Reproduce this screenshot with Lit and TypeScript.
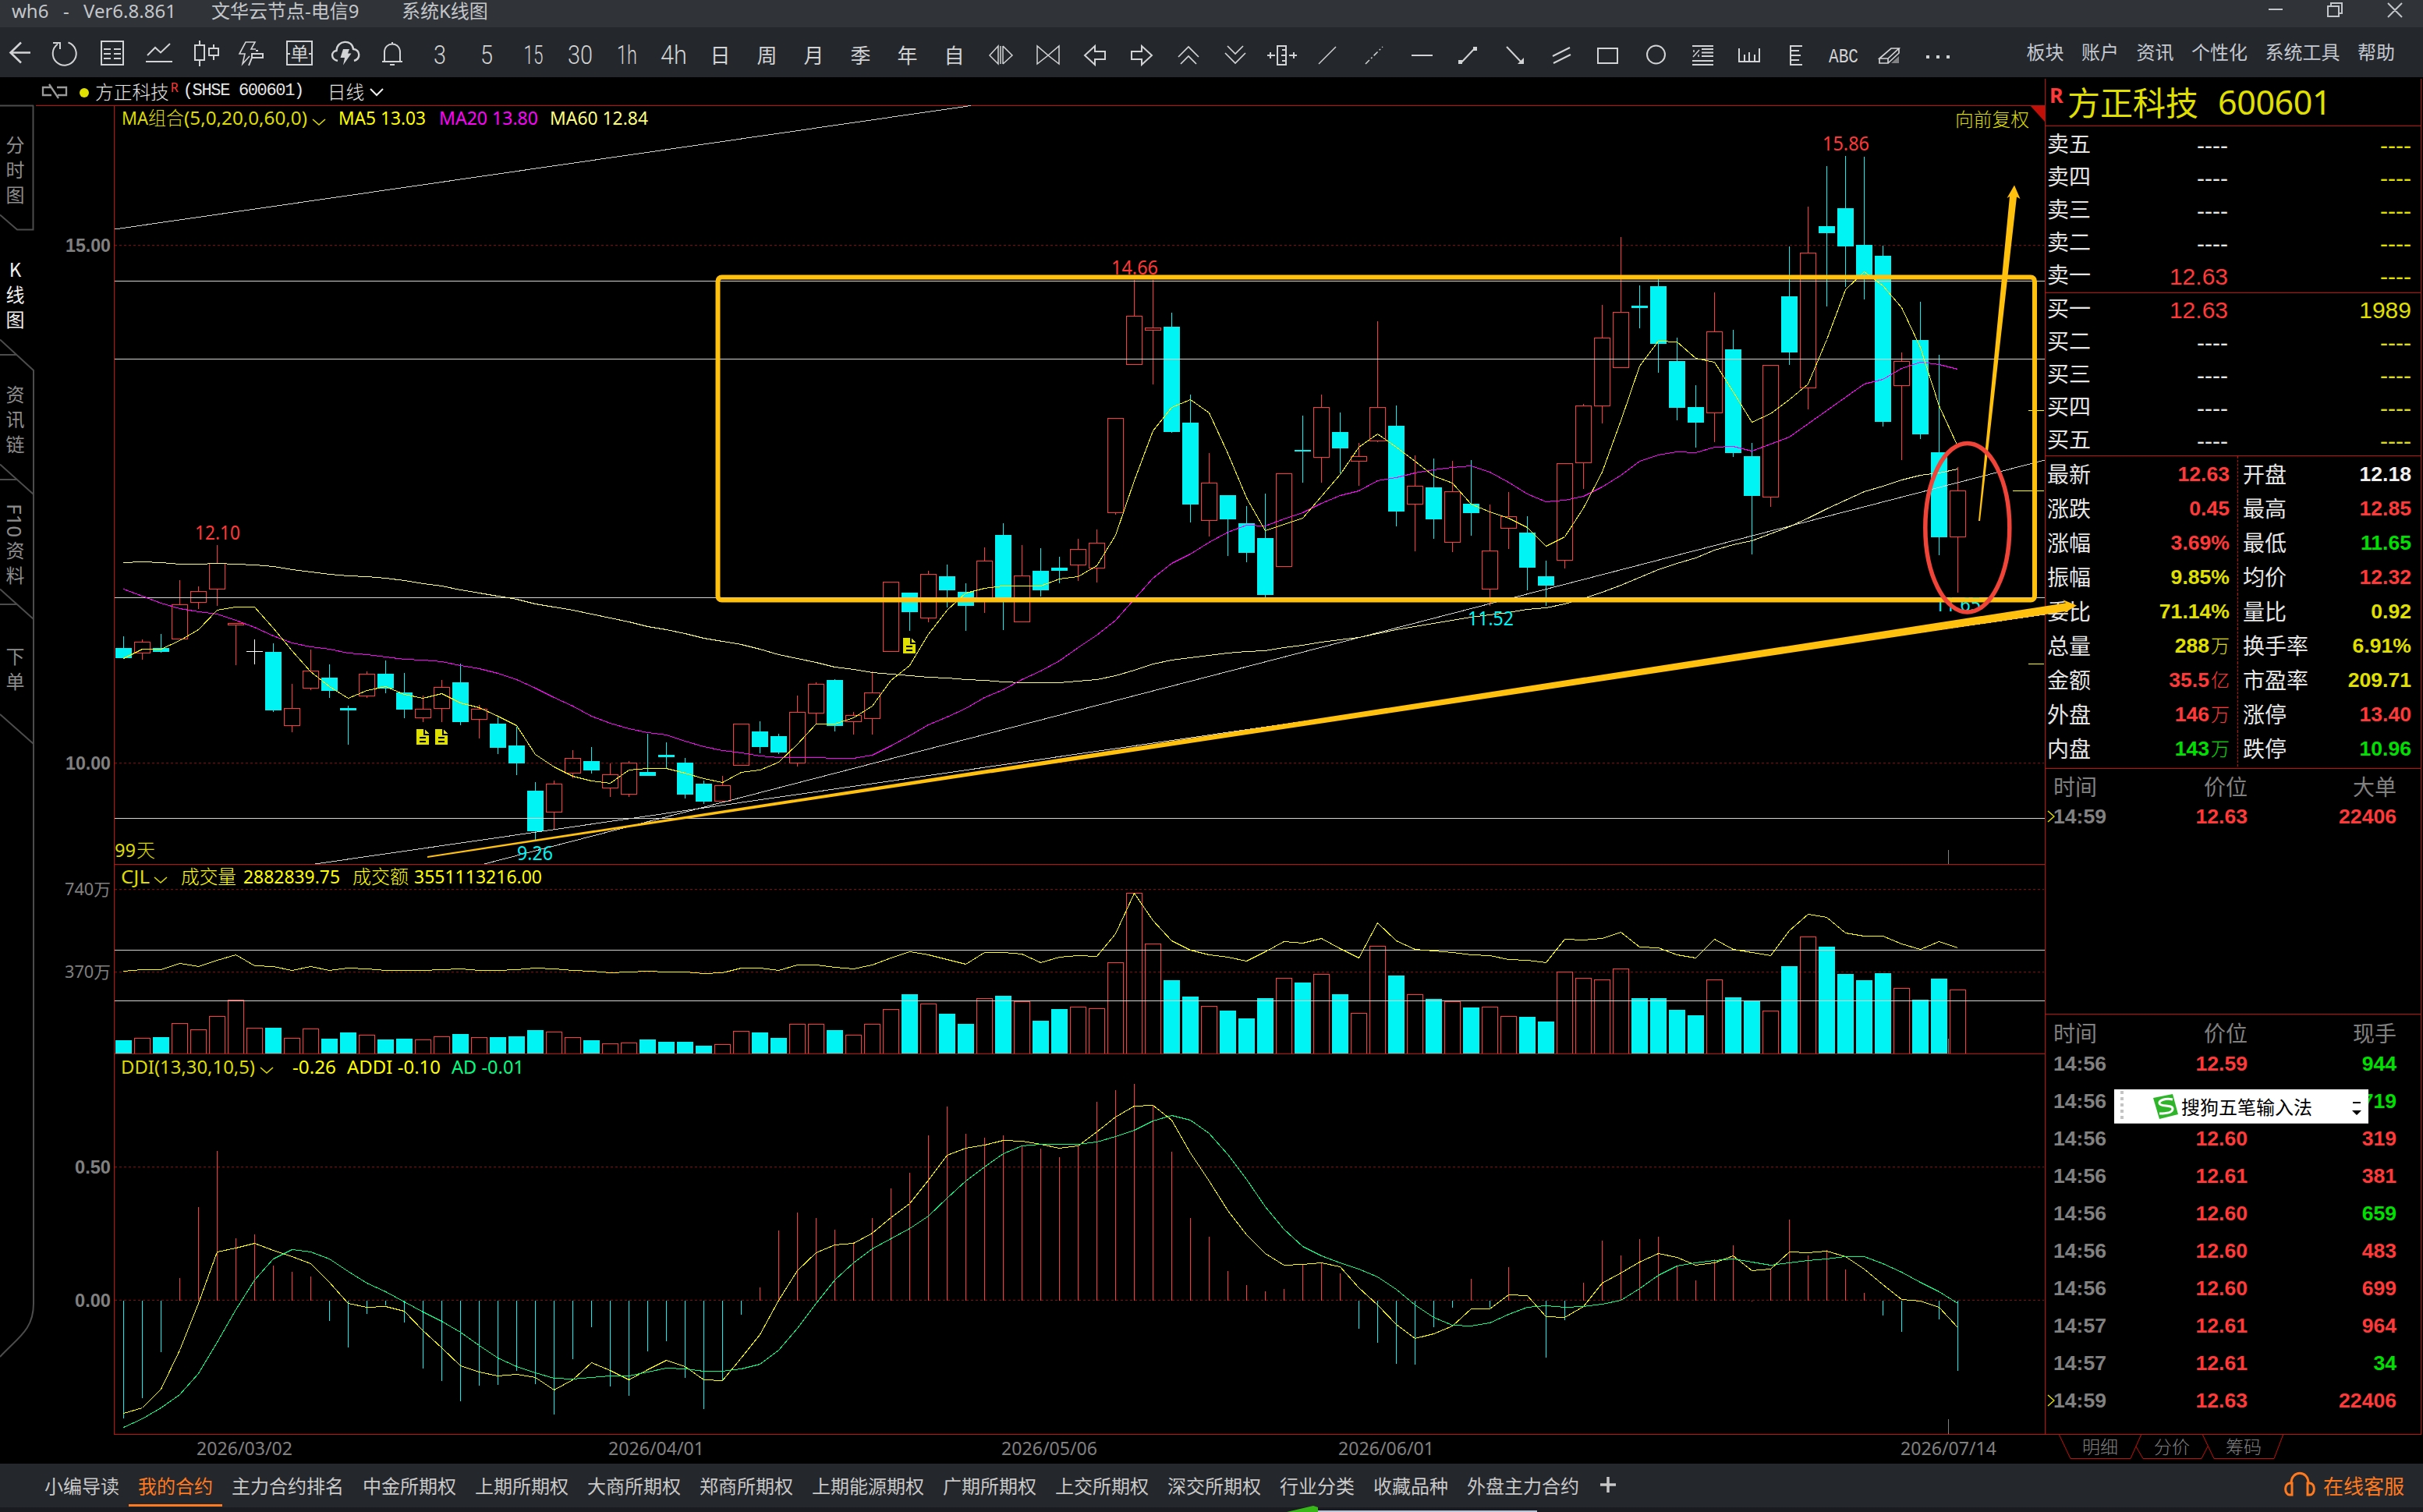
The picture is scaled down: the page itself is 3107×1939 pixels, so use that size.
import { LitElement, html, svg, css } from "lit";
import { customElement, property } from "lit/decorators.js";
import { classMap } from "lit/directives/class-map.js";

type Candle = [kind: number, high: number, top: number, bottom: number, low: number];

// kind: 1 up, -1 down, 0 flat; the rest are screen rows
const CANDLES: Candle[] = [
    [-1, 816, 831, 844, 844], [1, 820, 823.5, 837.5, 846], [-1, 813, 831, 836, 837], [1, 744, 775.5, 819.5, 820],
    [1, 752, 758.5, 772.5, 781], [1, 699, 722.5, 755.5, 777], [1, 799, 799.5, 801.5, 853], [0, 820, 835.5, 835.5, 852],
    [-1, 825, 836, 911, 913], [1, 877, 908.5, 930.5, 939], [1, 833, 860.5, 882.5, 885], [-1, 852, 869, 886, 895],
    [-1, 905, 908, 911, 955], [1, 861, 864.5, 892.5, 895], [-1, 847, 864, 883, 889], [-1, 863, 888, 910, 921],
    [1, 892, 909.5, 920.5, 926], [1, 872, 881.5, 908.5, 926], [-1, 851, 875, 926, 930], [1, 904, 909.5, 922.5, 947],
    [-1, 920, 928, 959, 967], [-1, 932, 956, 979, 994], [-1, 1003, 1014, 1066, 1077], [1, 1001, 1005.5, 1041.5, 1064],
    [1, 962, 972.5, 991.5, 998], [-1, 958, 976, 988, 992], [1, 979, 993.5, 1010.5, 1022], [1, 976, 978.5, 1018.5, 1022],
    [-1, 941, 990, 995, 995], [-1, 952, 968, 971, 985], [-1, 972, 978, 1019, 1024], [-1, 1001, 1005, 1028, 1031],
    [1, 995, 1007.5, 1027.5, 1028], [1, 928, 928.5, 981.5, 982], [-1, 925, 938, 958, 966], [-1, 941, 944, 965, 967],
    [1, 892, 913.5, 978.5, 983], [1, 875, 877.5, 914.5, 928], [-1, 871, 872, 931, 938], [1, 913, 917.5, 925.5, 942],
    [1, 861, 888.5, 921.5, 942], [1, 746, 746.5, 835.5, 836], [-1, 760, 760, 785, 809], [1, 732, 736.5, 792.5, 798],
    [-1, 724, 739, 757, 779], [-1, 748, 759, 777, 809], [1, 702, 719.5, 766.5, 786], [-1, 671, 686, 767, 808],
    [1, 699, 738.5, 797.5, 798], [-1, 703, 732, 757, 765], [-1, 714, 728, 732, 748], [1, 691, 704.5, 724.5, 745],
    [1, 679, 696.5, 728.5, 747], [1, 536, 536.5, 657.5, 660], [1, 359, 405.5, 467.5, 468], [1, 359, 420.5, 423.5, 493],
    [-1, 401, 419, 554, 555], [-1, 506, 542, 647, 670], [1, 581, 619.5, 667.5, 688], [-1, 635, 635, 666, 713],
    [-1, 649, 671, 709, 721], [-1, 633, 690, 763, 766], [1, 607, 607.5, 726.5, 727], [-1, 533, 577, 579, 619],
    [1, 506, 522.5, 586.5, 619], [-1, 529, 554, 575, 607], [1, 568, 585.5, 591.5, 623], [1, 412, 522.5, 565.5, 567],
    [-1, 520, 546, 656, 675], [1, 584, 623.5, 646.5, 707], [-1, 588, 625, 666, 691], [1, 591, 630.5, 695.5, 708],
    [-1, 590, 646, 658, 687], [1, 647, 706.5, 755.5, 777], [1, 631, 662.5, 677.5, 704], [-1, 662, 683, 728, 757],
    [-1, 719, 739, 751, 777], [1, 594, 594.5, 718.5, 729], [1, 518, 520.5, 593.5, 627], [1, 391, 433.5, 520.5, 543],
    [1, 304, 400.5, 471.5, 472], [-1, 366, 392, 395, 421], [-1, 358, 367, 441, 478], [-1, 433, 463, 523, 539],
    [-1, 494, 522, 542, 574], [1, 375, 425.5, 529.5, 567], [-1, 423, 448, 581, 586], [-1, 568, 585, 636, 711],
    [1, 468, 468.5, 637.5, 650], [-1, 316, 380, 452, 468], [1, 265, 324.5, 497.5, 525], [-1, 213, 290, 299, 393],
    [-1, 200, 267, 316, 368], [-1, 201, 314, 356, 384], [-1, 315, 328, 541, 547], [1, 452, 463.5, 494.5, 590],
    [-1, 387, 436, 557, 563], [-1, 455, 580, 689, 712], [1, 599, 629.5, 688.5, 760],
];

const MA5 = [
    844, 832, 832, 821, 807, 782, 778, 778, 805, 834, 861, 880, 895, 885, 880, 890, 895, 889, 901, 907, 918, 930, 967, 983, 995,
    1001, 1004, 987, 985, 985, 991, 998, 1003, 990, 987, 977, 954, 928, 928, 920, 905, 872, 853, 813, 782, 760, 754, 751, 751, 751,
    742, 739, 725, 686, 616, 552, 522, 512, 529, 581, 638, 680, 672, 664, 636, 608, 573, 556, 573, 591, 610, 619, 646, 656, 664,
    676, 700, 688, 651, 605, 539, 469, 437, 438, 459, 464, 502, 541, 530, 512, 492, 435, 371, 348, 366, 394, 445, 520, 572,
];
const MA20 = [
    755, 764, 773, 780, 784, 787, 795, 804, 815, 824, 829, 832, 837, 839, 842, 845, 846, 848, 853, 857, 863, 871, 882, 894, 905,
    918, 927, 934, 939, 942, 950, 957, 962, 965, 969, 971, 971, 971, 972, 972, 968, 956, 943, 929, 919, 908, 894, 884, 871, 860,
    847, 830, 814, 795, 768, 741, 722, 710, 695, 682, 673, 674, 665, 657, 645, 635, 629, 616, 612, 606, 602, 599, 597, 605, 618,
    633, 643, 641, 636, 624, 609, 591, 583, 579, 580, 573, 572, 578, 569, 560, 543, 526, 509, 492, 486, 472, 464, 467, 473,
];
const MA60 = [
    721, 720, 721, 723, 723, 722, 723, 724, 726, 730, 733, 736, 738, 739, 741, 744, 748, 751, 756, 760, 764, 768, 774, 778, 782,
    787, 792, 797, 803, 807, 812, 818, 822, 826, 832, 839, 844, 849, 855, 858, 862, 864, 866, 868, 869, 871, 872, 874, 875, 875,
    875, 873, 871, 866, 859, 851, 846, 843, 840, 837, 835, 834, 830, 827, 823, 820, 817, 812, 807, 803, 799, 795, 791, 788, 785,
    781, 779, 774, 767, 759, 750, 740, 730, 722, 715, 705, 698, 693, 684, 675, 664, 652, 641, 630, 623, 615, 609, 606, 601,
];

const VOLUME = [
    1334, 1331, 1330, 1312, 1320, 1303, 1282, 1318, 1318, 1331, 1319, 1332, 1324, 1327, 1333, 1332, 1333, 1329, 1326, 1330,
    1330, 1329, 1321, 1323, 1330, 1334, 1338, 1337, 1333, 1336, 1336, 1341, 1339, 1322, 1324, 1331, 1313, 1313, 1321, 1327,
    1313, 1294, 1275, 1287, 1300, 1313, 1280, 1277, 1284, 1309, 1294, 1291, 1293, 1234, 1145, 1210, 1257, 1278, 1290, 1296,
    1306, 1280, 1254, 1260, 1249, 1275, 1299, 1213, 1251, 1275, 1281, 1284, 1292, 1291, 1303, 1304, 1310, 1246, 1254, 1256,
    1242, 1280, 1280, 1295, 1302, 1256, 1279, 1283, 1296, 1239, 1201, 1214, 1249, 1257, 1248, 1267, 1282, 1255, 1269,
];
const TURNOVER = [
    1245, 1243, 1243, 1235, 1239, 1231, 1224, 1238, 1239, 1244, 1239, 1244, 1241, 1242, 1244, 1244, 1244, 1243, 1242, 1244,
    1244, 1243, 1241, 1242, 1244, 1245, 1247, 1246, 1245, 1246, 1246, 1248, 1247, 1241, 1241, 1244, 1237, 1237, 1240, 1242,
    1237, 1228, 1220, 1224, 1230, 1236, 1221, 1221, 1223, 1234, 1227, 1225, 1226, 1197, 1145, 1180, 1206, 1218, 1224, 1227,
    1232, 1220, 1207, 1209, 1203, 1216, 1228, 1183, 1206, 1217, 1219, 1221, 1224, 1225, 1230, 1231, 1234, 1204, 1205, 1203,
    1195, 1214, 1215, 1224, 1228, 1204, 1217, 1221, 1225, 1193, 1172, 1176, 1196, 1200, 1200, 1210, 1217, 1207, 1215,
];

// DDI series, zero line at 1132
const DDI = [
    1427, 1376, 1260, 1074, 896, 755, 974, 964, 1043, 1058, 1070, 1182, 1249, 1164, 1143, 1186, 1301, 1333, 1384, 1345,
    1343, 1307, 1341, 1417, 1278, 1198, 1347, 1370, 1258, 1233, 1325, 1403, 1332, 1166, 1098, 955, 909, 923, 953, 983,
    923, 849, 809, 715, 643, 711, 721, 715, 740, 748, 770, 740, 631, 602, 586, 640, 757, 923, 970, 1056,
    1092, 1107, 1102, 1040, 1035, 1062, 1201, 1237, 1290, 1292, 1198, 1149, 1076, 1149, 1047, 1128, 1274, 1180, 1086, 980,
    1017, 976, 970, 1045, 1080, 1027, 992, 1132, 1050, 927, 1017, 1004, 1053, 1111, 1168, 1209, 1132, 1178, 1307,
];
const ADDI = [
    1415, 1402, 1355, 1257, 1138, 1009, 999, 987, 1005, 1022, 1038, 1086, 1139, 1149, 1147, 1159, 1208, 1250, 1295, 1311,
    1321, 1317, 1325, 1356, 1331, 1287, 1307, 1330, 1305, 1282, 1297, 1331, 1332, 1276, 1217, 1130, 1056, 1011, 991, 987,
    963, 924, 887, 830, 766, 748, 740, 730, 732, 738, 748, 743, 707, 671, 643, 640, 679, 760, 832, 906,
    967, 1014, 1042, 1040, 1037, 1046, 1099, 1143, 1192, 1226, 1216, 1195, 1153, 1153, 1117, 1120, 1172, 1175, 1146, 1088,
    1063, 1035, 1013, 1024, 1042, 1036, 1019, 1057, 1053, 1010, 1012, 1007, 1022, 1052, 1091, 1129, 1132, 1148, 1200,
];
const AD = [
    1451, 1428, 1402, 1368, 1315, 1237, 1154, 1079, 1027, 1004, 1010, 1028, 1059, 1087, 1110, 1134, 1160, 1184, 1211, 1245,
    1276, 1298, 1313, 1326, 1329, 1324, 1322, 1322, 1312, 1301, 1304, 1309, 1309, 1304, 1291, 1256, 1202, 1138, 1080, 1037,
    1002, 976, 950, 919, 874, 832, 796, 763, 743, 738, 738, 738, 734, 719, 703, 681, 667, 679, 711, 764,
    828, 895, 952, 996, 1019, 1036, 1053, 1073, 1104, 1142, 1175, 1194, 1196, 1188, 1167, 1148, 1144, 1148, 1146, 1140,
    1130, 1101, 1068, 1045, 1036, 1030, 1028, 1035, 1042, 1036, 1030, 1028, 1022, 1022, 1038, 1060, 1085, 1110, 1139,
];

const cx = (i: number) => 158.5 + 24 * i;
const ddiY = (v: number) => Math.round(1090 + v / 1.96) + 0.5;
const path = (ys: number[]) => ys.map((y, i) => `${cx(i)},${y + 0.5}`).join(" ");
const ddiPath = (vs: number[]) => vs.map((v, i) => `${cx(i)},${ddiY(v)}`).join(" ");

@customElement("kline-chart")
export class KlineChart extends LitElement {

    static styles = css`
        :host {
            display: block;
            width: 2578px;
        }
        .head {
            display: flex;
            align-items: center;
            height: 36px;
            box-sizing: border-box;
            padding-left: 9px;
            color: #e6e6e6;
            font: 300 23.7px/36px "Noto Sans CJK SC", sans-serif;
            white-space: pre;
        }
        .head .dot {
            width: 12px;
            height: 12px;
            border-radius: 6px;
            background: #e0e000;
            margin: 3px 8px 0 15px;
        }
        .head sup {
            color: #ff3838;
            font: 16px/20px "Noto Sans", sans-serif;
            align-self: flex-start;
            width: 10px;
            margin: 3px 6px 0 2px;
        }
        .head .code {
            font: 22px/38px "Liberation Mono", monospace;
            letter-spacing: -1.35px;
            margin-right: 31px;
        }
        svg {
            display: block;
        }
        .crisp {
            shape-rendering: crispEdges;
        }
        .frame { stroke: #c01008; fill: none; }
        .grid { stroke: #860808; stroke-dasharray: 3 3; }
        .user { stroke: #d6d6d0; fill: none; }
        .up { stroke: #ff3838; fill: none; }
        .flat { stroke: #fff; }
        .down { stroke: #00f4f4; }
        .block { fill: #00f4f4; }
        .tick { stroke: #808080; }
        .ma5 { stroke: #ffff00; fill: none; }
        .ma20 { stroke: #ff00ff; fill: none; }
        .ma60 { stroke: #ffff80; fill: none; }
        .ad { stroke: #00ff80; fill: none; }
        .note { fill: #e0e000; }
        .slot { stroke: #000; stroke-width: 2; fill: none; }
        text {
            font: 24px "Noto Sans", "Noto Sans CJK SC", sans-serif;
        }
        .han { font-family: "Noto Sans CJK SC", sans-serif; font-weight: 300; }
        .bold { font: bold 23px "Liberation Sans", sans-serif; }
        .price { font-size: 25px; }
        .scale { font-size: 21px; }
        .c-red { fill: #ff3838; }
        .c-cyan { fill: #00f4f4; }
        .c-gray { fill: #808080; }
        .c-dim { fill: #dcdc00; }
        .c-yellow { fill: #ffff00; }
        .c-magenta { fill: #ff00ff; }
        .c-pale { fill: #ffff80; }
        .c-green { fill: #00ff80; }
        .chev { fill: none; stroke-width: 1.6; }
        .chev.y { stroke: #dcdc00; }
        .chev.w { stroke: #f0f0f0; stroke-width: 2; }
        .link { fill: none; stroke: #9a9a9a; stroke-width: 2.3; }
    `;

    private label(x: number, y: number, width: number, cls: string, text: string) {
        return svg`<text x=${x} y=${y} textLength=${width} lengthAdjust="spacingAndGlyphs" class=${cls}>${text}</text>`;
    }

    private candle([kind, high, top, bottom, low]: Candle, i: number) {
        const x = cx(i);
        if (kind < 0) {
            return svg`
                <path class="down" d="M${x} ${high}V${low}" />
                <rect class="block" x=${x - 10.5} y=${top} width="21" height=${bottom - top} />`;
        }
        if (kind === 0) {
            return svg`<path class="flat" d="M${x} ${high}V${low}M${x - 10.5} ${top}h21" />`;
        }
        return svg`
            <path class="up" d="M${x} ${high}V${top}M${x} ${bottom}V${low}" />
            <rect class="up" x=${x - 10} y=${top} width="20" height=${bottom - top} />`;
    }

    private volume(top: number, i: number) {
        return CANDLES[i][0] < 0
            ? svg`<rect class="block" x=${cx(i) - 10.5} y=${top} width="21" height=${1351 - top} />`
            : svg`<path class="up" d="M${cx(i) - 10} 1351V${top + 0.5}h20V1351" />`;
    }

    private noteMark(x: number, y: number) {
        return svg`
            <path class="note" d="M${x} ${y}h9v8h7v12h-16z M${x + 11} ${y}l5 6h-5z" />
            <path class="slot" d="M${x + 4} ${y + 11}h8M${x + 4} ${y + 16}h8" />`;
    }

    render() {
        return html`
            <div class="head">
                <svg width="34" height="22" viewBox="0 0 34 22">
                    <path class="link" d="M12 6H2v10h11M20 6h12v10h-11M10 2l12 18" />
                </svg>
                <span class="dot"></span>
                <span>方正科技</span>
                <sup>R</sup>
                <span class="code">(SHSE 600601)</span>
                <span>日线</span>
                <svg width="30" height="14" viewBox="0 0 30 14"><path class="chev w" d="M8 4l8 8 8-8" /></svg>
            </div>
            <svg width="2578" height="1742" viewBox="44 135 2578 1742">
                <g class="crisp">
                    <path class="frame" d="M46 135.5H2622M146.5 135V1840M146 1108.5H2622M146 1839.5H2622" />
                    <path class="grid" d="M147 314.5H2621M147 978.5H2621M147 1140.5H2621M147 1246.5H2621M147 1496.5H2621M147 1667.5H2621" />
                    ${CANDLES.map((c, i) => this.candle(c, i))}
                    ${VOLUME.map((v, i) => this.volume(v, i))}
                    ${DDI.map((v, i) => svg`<path class=${v > 1132 ? "down" : "up"} d="M${cx(i)} 1667.5V${ddiY(v)}" />`)}
                    <path class="frame" d="M146 1351.5H2622" />
                    <path class="tick" d="M2498.5 1090V1108M2498.5 1332V1351M2498.5 1820V1839" />
                    <path class="user" d="M147 360.5H2622M147 460.5H2622M147 766.5H2622M147 1049.5H2622M147 1218.5H2622M147 1283.5H2622" />
                    <path class="user" d="M147 294L1245 135.5M621 1108L2622 590M404 1108L2622 788" />
                    <polyline class="ma60" points=${path(MA60)} />
                    <polyline class="ma20" points=${path(MA20)} />
                    <polyline class="ma5" points=${path(MA5)} />
                    <polyline class="ma5" points=${path(TURNOVER)} />
                    <polyline class="ma5" points=${ddiPath(ADDI)} />
                    <polyline class="ad" points=${ddiPath(AD)} />
                    <path class="ma5" d="M2601 526.5H2621M2581 629.5H2621M2601 851.5H2621" />
                    ${this.noteMark(534, 935)} ${this.noteMark(558, 935)} ${this.noteMark(1158, 818)}
                </g>
                <path fill="#c01008" d="M2603 135H2622V156z" />
                ${this.label(156, 160, 34, "c-dim", "MA")}
                ${this.label(190, 160, 46, "c-dim han", "组合")}
                ${this.label(236, 160, 158, "c-dim", "(5,0,20,0,60,0)")}
                <path class="chev y" d="M401 153l8 7 8-7" />
                ${this.label(434, 160, 112, "c-yellow", "MA5 13.03")}
                ${this.label(563, 160, 127, "c-magenta", "MA20 13.80")}
                ${this.label(705, 160, 126, "c-pale", "MA60 12.84")}
                ${this.label(2507, 162, 95, "c-dim han", "向前复权")}
                ${this.label(250, 692, 58, "c-red price", "12.10")}
                ${this.label(1425, 352, 60, "c-red price", "14.66")}
                ${this.label(2337, 193, 60, "c-red price", "15.86")}
                ${this.label(663, 1103, 46, "c-cyan price", "9.26")}
                ${this.label(1882, 802, 59, "c-cyan price", "11.52")}
                ${this.label(2481, 784, 59, "c-cyan price", "11.65")}
                ${this.label(147, 1099, 27, "c-dim", "99")}
                ${this.label(175, 1099, 24, "c-dim han", "天")}
                ${this.label(155, 1133, 37, "c-dim", "CJL")}
                <path class="chev y" d="M198 1125l8 7 8-7" />
                ${this.label(232, 1133, 71, "c-yellow han", "成交量")}
                ${this.label(312, 1133, 124, "c-yellow", "2882839.75")}
                ${this.label(452, 1133, 72, "c-yellow han", "成交额")}
                ${this.label(531, 1133, 164, "c-yellow", "3551113216.00")}
                ${this.label(155, 1377, 172, "c-dim", "DDI(13,30,10,5)")}
                <path class="chev y" d="M334 1369l8 7 8-7" />
                ${this.label(375, 1377, 56, "c-yellow", "-0.26")}
                ${this.label(445, 1377, 120, "c-yellow", "ADDI -0.10")}
                ${this.label(579, 1377, 93, "c-green", "AD -0.01")}
                ${this.label(84, 323, 58, "c-gray bold", "15.00")}
                ${this.label(84, 987, 58, "c-gray bold", "10.00")}
                ${this.label(83, 1148, 59, "c-gray scale", "740万")}
                ${this.label(83, 1254, 59, "c-gray scale", "370万")}
                ${this.label(96, 1505, 46, "c-gray bold", "0.50")}
                ${this.label(96, 1676, 46, "c-gray bold", "0.00")}
                ${this.label(252, 1866, 123, "c-gray", "2026/03/02")}
                ${this.label(780, 1866, 123, "c-gray", "2026/04/01")}
                ${this.label(1284, 1866, 123, "c-gray", "2026/05/06")}
                ${this.label(1716, 1866, 123, "c-gray", "2026/06/01")}
                ${this.label(2437, 1866, 123, "c-gray", "2026/07/14")}
            </svg>
        `;
    }
}

const word = (text: string, width: number) =>
    svg`<text class="word" x=${-width / 2} y="47" textLength=${width} lengthAdjust="spacingAndGlyphs">${text}</text>`;
const han = (text: string) => svg`<text class="han" x="-0.5" y="45.5">${text}</text>`;

const TOOLS = [
    svg`<path d="M3 19.5L-10.5 32.5 3 45.5M-10.5 32.5H15" stroke-width="2.6" />`,
    svg`<path d="M3.5 19.5A15 15 0 1 1-10 21.5M-16 20H-7V28" />`,
    svg`<path d="M-14 18H14V48H-14zM-11 28H-2M2 28H11M-11 34H-2M2 34H11M-11 40H-2M2 40H11" />`,
    svg`<path d="M-15 36L-5 26 2 32.5 14 21M-17 44H17" />`,
    svg`<path d="M-14 23H-2V42H-14zM-8 17V23M-8 42V50M4 27H16V36H4zM10 22V27M10 36V42" />`,
    svg`<path d="M-4 37L-13 47-10 34H-17L-9 19H3L-2 28H4" stroke-width="1.6" /><path d="M-1 34H13V39H-1zM-1 39L-5 49M4 30H7" />`,
    svg`<path d="M-16 18H16V48H-16zM-16 34H-12M12 34H16" /><text class="han small" x="0" y="42">单</text>`,
    svg`<path d="M-11 43C-20 41-20 31-12.500 30-12 16 8 15 9 28 18 29 19 40 10 43" stroke-width="2.400" /><path class="solid" d="M-4 28H4L2 33.500H6.500L-4 48.500-2 39H-7.500z" />`,
    svg`<path d="M-14 44H12M-11 44V32C-11 18 9 18 9 32V44M-1 22V19M-4 48H2" />`,
    word("3", 16), word("5", 16), word("15", 25), word("30", 32), word("1h", 26), word("4h", 34),
    han("日"), han("周"), han("月"), han("季"), han("年"), han("自"),
    svg`<path d="M-4 24L-15 36-4 47zM-1 24V47M2 24V47M2 24L14 36 2 47" stroke-width="1.5" />`,
    svg`<path d="M-14 24V47L0 36zM14 24V47L0 36z" stroke-width="1.5" />`,
    svg`<path d="M-13 36L0 24V31H13V41H0V48z" />`,
    svg`<path d="M13 36L0 24V31H-13V41H0V48z" />`,
    svg`<path d="M-13 38L0 25 13 38M-10 47L0 37 10 47" stroke-width="1.7" />`,
    svg`<path d="M-13 33L0 46 13 33M-10 24L0 34 10 24" stroke-width="1.7" />`,
    svg`<path d="M-6 24H5V48H-6zM0 29H5M-1 36H5M0 43H5M-19 36H-9M9 36H19M-15 32V40M15 32V40" />`,
    svg`<path d="M-13 47L9 25" stroke-width="1.5" />`,
    svg`<path d="M-13 47L9 25" stroke-width="1.5" stroke-dasharray="7 3 2 3" />`,
    svg`<path d="M-14 36H13" />`,
    svg`<path d="M-11 46L8 26" /><path class="solid" d="M-14 42h5v5h-5zM5 25h5v5h-5z" />`,
    svg`<path d="M-12 25L7 45" /><path class="solid" d="M2 47H10V39z" />`,
    svg`<path d="M-13 37L9 26M-12 46L10 35" />`,
    svg`<path d="M-15 27H10V46H-15z" />`,
    svg`<ellipse cx="-0.5" cy="35" rx="11.5" ry="11.5" />`,
    svg`<path d="M-14 24H13M-2 28H13M-2 32.5H13M-2 37H13M-14 43H13M-14 48H13" /><path d="M-13 38L-5 29M-12 29V32M-6 35V38" stroke-width="1.5" />`,
    svg`<path d="M-14 27V44H12V27M-7 44V35M-1 44V32M6 44V35" />`,
    svg`<path d="M7 24H-8V48H7M-8 30H3M-8 36H5M-8 42H3" />`,
    svg`<text class="abc" x="-19" y="45" textLength="38" lengthAdjust="spacingAndGlyphs">ABC</text>`,
    svg`<path d="M-14 40L1 27H11L-3 40zM-14 40V46H-3V40M-3 46L11 33V27" stroke-width="1.7" /><path class="shade" d="M1 46L11 37V46z" />`,
    svg`<path class="solid" d="M-14 36h4v4h-4zM-1 36h4v4h-4zM12 36h4v4h-4z" />`,
];

@customElement("tool-bar")
export class ToolBar extends LitElement {

    static styles = css`
        :host {
            display: flex;
            justify-content: space-between;
            height: 64px;
            background: #24272c;
            padding-right: 36px;
            box-sizing: border-box;
        }
        .tools {
            display: flex;
            margin-left: -6px;
        }
        svg {
            flex: none;
            fill: none;
            stroke: #d2d3d4;
            stroke-width: 2;
        }
        .solid { fill: #d2d3d4; stroke: none; }
        .shade { fill: #808284; stroke: none; }
        text { fill: #d2d3d4; stroke: none; }
        .word { font: 300 34px Roboto, sans-serif; }
        .han { font: 26px "Noto Sans CJK SC", sans-serif; text-anchor: middle; }
        .small { font-size: 23px; }
        .abc { font: 26px "Liberation Mono", monospace; }
        .menu {
            display: flex;
            gap: 22.5px;
            font: 24px/61px "Noto Sans CJK SC", sans-serif;
            color: #c3c8d0;
        }
    `;

    render() {
        return html`
            <div class="tools">
                ${TOOLS.map((tool) => html`<svg width="60" height="64" viewBox="-30 0 60 64">${tool}</svg>`)}
            </div>
            <div class="menu">
                ${["板块", "账户", "资讯", "个性化", "系统工具", "帮助"].map((name) => html`<span>${name}</span>`)}
            </div>
        `;
    }
}

@customElement("side-tabs")
export class SideTabs extends LitElement {

    static styles = css`
        :host {
            display: block;
            position: relative;
            width: 44px;
            padding-top: 36px;
            box-sizing: border-box;
        }
        .tab {
            display: flex;
            align-items: center;
            justify-content: center;
            height: 160px;
            width: 38px;
            padding-top: 14px;
            box-sizing: border-box;
            color: #8c8c8c;
            font: 24px/38px "Noto Sans CJK SC", sans-serif;
        }
        .tab span {
            writing-mode: vertical-rl;
            letter-spacing: 8px;
        }
        .tab.active {
            color: #f0f0f0;
        }
        .tab.active span {
            text-orientation: upright;
        }
        .tab i {
            font: 26px/38px "Noto Sans", sans-serif;
            letter-spacing: 0;
            margin-bottom: 5px;
        }
        svg {
            position: absolute;
            left: 0;
            top: 0;
            fill: none;
            stroke: #4c4c4c;
            stroke-width: 2;
        }
    `;

    render() {
        return html`
            <svg width="44" height="1778" viewBox="0 99 44 1778">
                <path d="M0 135.5H43M42.5 135V294.5H22L0 275.5M0 455H22M0 435.5L43 475V1672C43 1706 22 1716 0 1740
                    M0 615H22M0 595.5L43 634M0 775H22M0 755.5L43 794M0 916L43 954" />
            </svg>
            <div class="tab"><span>分时图</span></div>
            <div class="tab active"><span>K线图</span></div>
            <div class="tab"><span>资讯链</span></div>
            <div class="tab"><span><i>F10</i>资料</span></div>
            <div class="tab"><span>下单</span></div>
        `;
    }
}

const NONE = "----";

// name, value, unit, tint, twice per row
const STATS = [
    ["最新", "12.63", "", "r", "开盘", "12.18", "w"],
    ["涨跌", "0.45", "", "r", "最高", "12.85", "r"],
    ["涨幅", "3.69%", "", "r", "最低", "11.65", "g"],
    ["振幅", "9.85%", "", "y", "均价", "12.32", "r"],
    ["委比", "71.14%", "", "y", "量比", "0.92", "y"],
    ["总量", "288", "万", "y", "换手率", "6.91%", "y"],
    ["金额", "35.5", "亿", "r", "市盈率", "209.71", "y"],
    ["外盘", "146", "万", "r", "涨停", "13.40", "r"],
    ["内盘", "143", "万", "g", "跌停", "10.96", "g"],
];

const TICKS = [
    ["14:56", "12.59", "944", "g"],
    ["14:56", "12.60", "719", "g"],
    ["14:56", "12.60", "319", "r"],
    ["14:56", "12.61", "381", "r"],
    ["14:56", "12.60", "659", "g"],
    ["14:56", "12.60", "483", "r"],
    ["14:56", "12.60", "699", "r"],
    ["14:57", "12.61", "964", "r"],
    ["14:57", "12.61", "34", "g"],
    ["14:59", "12.63", "22406", "r"],
];

@customElement("quote-panel")
export class QuotePanel extends LitElement {

    @property()
    name: string = "";

    @property()
    code: string = "";

    static styles = css`
        :host {
            display: block;
            width: 485px;
            padding-top: 2px;
            box-sizing: border-box;
            color: #e6e6e6;
            font: 28px "Noto Sans CJK SC", sans-serif;
        }
        .frame {
            width: 483px;
            height: 1739px;
            box-sizing: border-box;
            border: 1px solid #c01008;
            border-top: none;
        }
        .title {
            display: flex;
            height: 61px;
            box-sizing: border-box;
            border-bottom: 1px solid #c01008;
            color: #e0e000;
            font-size: 42px;
            line-height: 58px;
            white-space: pre;
            padding-left: 5px;
        }
        .title sup {
            color: #ff3838;
            font: bold 27px/36px "Noto Sans", sans-serif;
            margin-right: 5px;
            width: 18px;
            padding-top: 3px;
        }
        .title b {
            font: 43px/60px "Noto Sans", sans-serif;
            letter-spacing: -0.4px;
            margin-left: 25px;
        }
        .book {
            box-sizing: border-box;
            height: 214px;
            padding-top: 1px;
            border-bottom: 1px solid #c01008;
        }
        .book.buy {
            height: 209px;
            padding-top: 0;
        }
        .line {
            display: grid;
            grid-template-columns: 120px 112px 1fr;
            padding: 0 12px 0 2px;
            height: 42px;
            line-height: 40px;
        }
        .line span + span {
            text-align: right;
            font: 30px/47px "Liberation Sans", sans-serif;
        }
        .buy .line {
            line-height: 37px;
        }
        .buy .line span + span {
            line-height: 43px;
        }
        .y { color: #e0e000; }
        .r { color: #ff3838; }
        .g { color: #00e000; }
        .w { color: #f0f0f0; }
        .stats {
            height: 401px;
            box-sizing: border-box;
            border-bottom: 1px solid #c01008;
        }
        .pair {
            display: grid;
            grid-template-columns: 246px 1fr;
            height: 44px;
            line-height: 44px;
        }
        .pair > div {
            display: flex;
            justify-content: space-between;
            padding: 0 10px 0 2px;
        }
        .pair > div + div {
            border-left: 1px dashed #c01008;
            padding: 0 12px 0 6px;
        }
        .pair b, .tick {
            font: bold 26.6px/46px "Liberation Sans", "Noto Sans CJK SC", sans-serif;
        }
        .pair i {
            font: 300 24px "Noto Sans CJK SC", sans-serif;
            margin-left: 2px;
        }
        .list {
            height: 315px;
            box-sizing: border-box;
            border-bottom: 1px solid #c01008;
        }
        .columns {
            display: grid;
            grid-template-columns: 170px 79px 1fr;
            padding: 0 31px 0 10px;
            height: 39px;
            line-height: 46px;
            color: #808080;
            white-space: nowrap;
        }
        .list .columns {
            height: 37px;
            line-height: 44px;
        }
        .columns span + span, .tick span + span {
            text-align: right;
        }
        .tick {
            display: grid;
            position: relative;
            grid-template-columns: 170px 79px 1fr;
            padding: 0 31px 0 10px;
            height: 48px;
            line-height: 48px;
            color: #808080;
        }
        .tick svg {
            position: absolute;
            left: 2px;
            top: 16px;
            fill: none;
            stroke: #e0e000;
            stroke-width: 1.5;
        }
        .tick .r, .price { color: #ff3838; }
        .tick .g { color: #00e000; }
        .tabs {
            display: block;
        }
        .tabs path {
            fill: none;
            stroke: #c01008;
        }
        .tabs text {
            fill: #808080;
            font: 300 23px "Noto Sans CJK SC", sans-serif;
        }
    `;

    private bookLine(name: string, price: string, amount: string) {
        return html`
            <div class="line">
                <span>${name}</span>
                <span class=${classMap({ r: price !== NONE })}>${price}</span>
                <span class="y">${amount}</span>
            </div>
        `;
    }

    private tick([time, price, size, tint]: string[], marked: boolean) {
        return html`
            <div class="tick">
                ${marked ? html`<svg width="10" height="16"><path d="M1 1l8 7-8 7" /></svg>` : null}
                <span>${time}</span><span class="price">${price}</span><span class=${tint}>${size}</span>
            </div>
        `;
    }

    render() {
        return html`
            <div class="frame">
                <div class="title"><sup>R</sup><span>${this.name}</span><b>${this.code}</b></div>
                <div class="book">
                    ${this.bookLine("卖五", NONE, NONE)}
                    ${this.bookLine("卖四", NONE, NONE)}
                    ${this.bookLine("卖三", NONE, NONE)}
                    ${this.bookLine("卖二", NONE, NONE)}
                    ${this.bookLine("卖一", "12.63", NONE)}
                </div>
                <div class="book buy">
                    ${this.bookLine("买一", "12.63", "1989")}
                    ${this.bookLine("买二", NONE, NONE)}
                    ${this.bookLine("买三", NONE, NONE)}
                    ${this.bookLine("买四", NONE, NONE)}
                    ${this.bookLine("买五", NONE, NONE)}
                </div>
                <div class="stats">
                    ${STATS.map(([a, av, unit, at, b, bv, bt]) => html`
                        <div class="pair">
                            <div><span>${a}</span><b class=${at}>${av}${unit ? html`<i>${unit}</i>` : null}</b></div>
                            <div><span>${b}</span><b class=${bt}>${bv}</b></div>
                        </div>
                    `)}
                </div>
                <div class="list">
                    <div class="columns"><span>时间</span><span>价位</span><span>大单</span></div>
                    ${this.tick(["14:59", "12.63", "22406", "r"], true)}
                </div>
                <div class="columns"><span>时间</span><span>价位</span><span>现手</span></div>
                ${TICKS.map((t, i) => this.tick(t, i === TICKS.length - 1))}
            </div>
            <svg class="tabs" width="485" height="36" viewBox="2622 1840 485 36">
                <path d="M2640 1839L2655 1870.5H2732L2746 1839M2739 1855L2748 1870.5H2823L2831 1855M2824 1839L2839 1870.5H2916L2928 1839" />
                <text x="2670" y="1864">明细</text>
                <text x="2762" y="1864">分价</text>
                <text x="2854" y="1864">筹码</text>
            </svg>
        `;
    }
}

const GROUPS = [
    "小编导读", "我的合约", "主力合约排名", "中金所期权", "上期所期权", "大商所期权", "郑商所期权", "上期能源期权",
    "广期所期权", "上交所期权", "深交所期权", "行业分类", "收藏品种", "外盘主力合约",
];

@customElement("app-root")
export class AppRoot extends LitElement {

    static styles = css`
        :host {
            display: block;
            position: relative;
            width: 3107px;
            height: 1939px;
            overflow: hidden;
            background: #000;
        }
        .caption {
            display: grid;
            grid-template-columns: 66px 26px 164px 244px 1fr auto;
            height: 35px;
            padding: 0 26px 0 15px;
            box-sizing: border-box;
            background: #303338;
            color: #c3c6ca;
            font: 24px/27px "Noto Sans", "Noto Sans CJK SC", sans-serif;
            white-space: nowrap;
        }
        .caption svg {
            fill: none;
            stroke: #c3c6ca;
            stroke-width: 2;
        }
        .main {
            display: flex;
            height: 1778px;
        }
        .bottom {
            display: flex;
            height: 56px;
            background: #24272c;
            padding-left: 45px;
            color: #c8c8c8;
            font: 24px/55px "Noto Sans CJK SC", sans-serif;
        }
        .group {
            padding: 0 12px;
            height: 55px;
            box-sizing: border-box;
            border-bottom: 3px solid transparent;
        }
        .group.active {
            color: #ff7a1e;
            border-color: #ff7a1e;
        }
        .plus {
            margin: 17px 0 0 15px;
            stroke: #c8c8c8;
            stroke-width: 3.5;
        }
        .service {
            display: flex;
            gap: 10px;
            margin-left: auto;
            margin-right: 24px;
            color: #ff7a1e;
            font-size: 26px;
        }
        .service svg {
            margin-top: 10px;
            fill: none;
            stroke: #ff7a1e;
            stroke-width: 3;
        }
        .edge {
            display: block;
            background: #1a1b20;
        }
        .marks {
            position: absolute;
            left: 0;
            top: 0;
        }
        .marks .shape { fill: #ffc00e; }
        .marks .box { fill: none; stroke: #ffc00e; stroke-width: 6; }
        .marks .ring { fill: none; stroke: #f04438; stroke-width: 5.5; }
        .ime {
            position: absolute;
            left: 2711px;
            top: 1397px;
            width: 326px;
            height: 44px;
            box-sizing: border-box;
            display: flex;
            align-items: center;
            padding-left: 8px;
            background: #fff;
            border-bottom: 1px solid #c8c8c8;
            color: #000;
            font: 24px/44px "Noto Sans CJK SC", sans-serif;
        }
        .ime .grip {
            width: 4px;
            height: 40px;
            background: repeating-linear-gradient(#c4c4c4 0 4px, transparent 4px 8px);
            margin-right: 38px;
        }
        .ime .logo {
            margin-right: 4px;
        }
        .ime .tail {
            margin-left: 51px;
        }
    `;

    render() {
        return html`
            <div class="caption">
                <span>wh6</span><span>-</span><span>Ver6.8.861</span><span>文华云节点-电信9</span><span>系统K线图</span>
                <svg width="176" height="30" viewBox="0 0 176 30">
                    <path d="M4 12H22M80 8H94V21H80zM84 8V4H98V17H94M157 4L175 22M175 4L157 22" />
                </svg>
            </div>
            <tool-bar></tool-bar>
            <div class="main">
                <side-tabs></side-tabs>
                <kline-chart></kline-chart>
                <quote-panel name="方正科技" code="600601"></quote-panel>
            </div>
            <div class="bottom">
                ${GROUPS.map((name, i) => html`<span class=${classMap({ group: true, active: i === 1 })}>${name}</span>`)}
                <svg class="plus" width="20" height="20"><path d="M10 0V20M0 10H20" /></svg>
                <div class="service">
                    <svg width="40" height="34" viewBox="0 0 40 34">
                        <path d="M10 15H7a5 7 0 0 0 0 15h3zM30 15h3a5 7 0 0 1 0 15h-3zM9 15C9-2 31-2 31 15" />
                    </svg>
                    <span>在线客服</span>
                </div>
            </div>
            <svg class="edge" width="3107" height="6" viewBox="0 1933 3107 6">
                <path fill="#b8c4d8" d="M1688 1937H1971V1939H1688z" />
            </svg>
            <svg class="marks" width="3107" height="1939">
                <rect class="box" x="920.5" y="355.5" width="1688.5" height="414" rx="5" />
                <path class="shape" d="M548 1098L2649 773.3 2645 769 2663 776.5 2644 788 2649 784 548 1100z" />
                <path class="shape" d="M2537 668L2577 252 2573.5 254 2583 237.5 2590.5 255 2586 252.5 2539 668z" />
                <ellipse class="ring" cx="2522.8" cy="676.7" rx="54" ry="108.3" />
                <path fill="#38b818" d="M1650 1939L1684 1931 1690 1933V1939z" />
            </svg>
            <div class="ime">
                <span class="grip"></span>
                <svg class="logo" width="32" height="32" viewBox="0 0 32 32">
                    <path fill="#2fb52a" d="M0 5L25 0 32 26 8 32z" />
                    <path fill="none" stroke="#fff" stroke-width="3" d="M25 7C16 5 7 8 8 12 9 17 25 13 25 19 25 24 15 25 8 25" />
                </svg>
                <span>搜狗五笔输入法</span>
                <svg class="tail" width="12" height="22"><path d="M1 5h10v2H1zM0 16h12l-6 6z" /></svg>
            </div>
        `;
    }
}
